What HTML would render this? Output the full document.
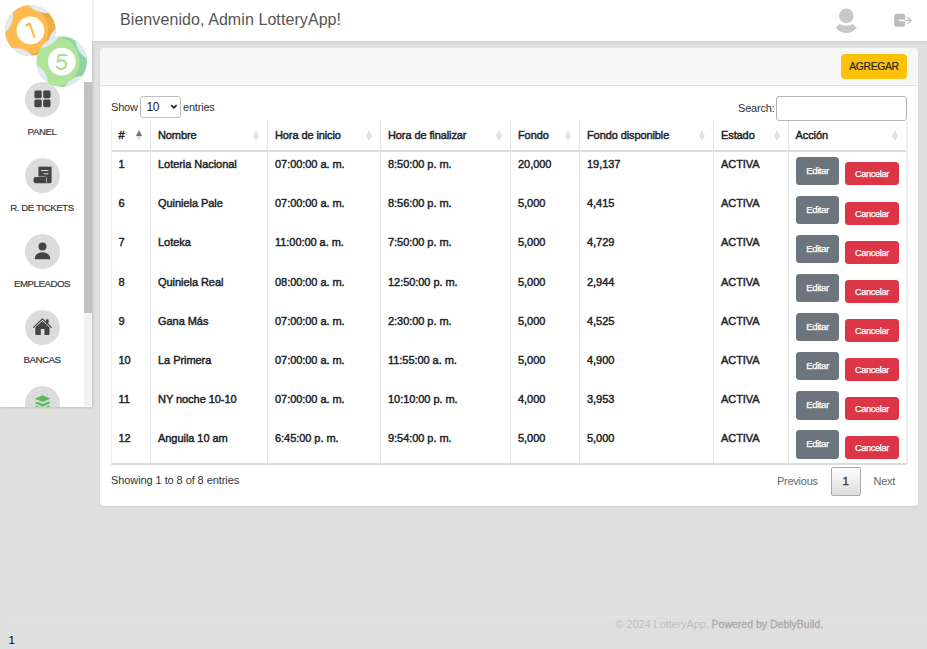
<!DOCTYPE html>
<html><head><meta charset="utf-8">
<style>
*{box-sizing:border-box;margin:0;padding:0}
html,body{width:927px;height:649px;overflow:hidden}
body{position:relative;background:#dfdfdf;font-family:"Liberation Sans",sans-serif;color:#212529}
.abs{position:absolute}
#header{left:92px;top:0;width:835px;height:41px;background:linear-gradient(90deg,#ececec 0,#f8f8f8 1.5px,#fff 3px)}
#hshadow{left:93px;top:41px;width:834px;height:4px;background:linear-gradient(#d2d2d2,#dfdfdf)}
#title{left:120px;top:10.8px;letter-spacing:0.08px;font-size:16px;color:#555;white-space:nowrap;line-height:18px}
#sidebar{left:0;top:0;width:92px;height:407px;overflow:hidden;background:#fff;box-shadow:1px 1px 2px rgba(0,0,0,.12)}
#track{left:84px;top:82px;width:8px;height:325px;background:#f3f3f3}
#thumb{left:84px;top:82px;width:8px;height:231px;background:#c1c1c1}
.circ{position:absolute;left:24.5px;width:35px;height:35px;border-radius:50%;background:#dcdcdc}
.circ svg{position:absolute;left:0;top:0}
.lbl{position:absolute;left:0;width:84px;text-align:center;font-size:9.7px;letter-spacing:-0.45px;color:#393939;-webkit-text-stroke:0.2px #393939;white-space:nowrap;line-height:12px}
#card{left:100px;top:48px;width:818px;height:458px;background:#fff;border-radius:4px;overflow:hidden;box-shadow:0 1px 2px rgba(0,0,0,.07)}
#cardhead{left:0;top:0;width:818px;height:38px;background:#f7f7f7;border-bottom:1px solid #e2e2e2}
#agregar{left:741px;top:5.5px;width:66px;height:25.5px;background:#ffc107;border-radius:4px;font-size:10.3px;letter-spacing:-0.3px;-webkit-text-stroke:0.2px #212529;color:#212529;text-align:center;line-height:25.5px}
.t{position:absolute;white-space:nowrap;line-height:12px}
.show{font-size:11px;color:#333;letter-spacing:-0.2px}
#sel{left:140px;top:96px;width:40.5px;height:21.5px;border:1px solid #bdbdbd;border-radius:3px;background:#fff;font-size:12px;letter-spacing:-0.6px;color:#222;padding-left:5.6px;line-height:21.6px}
#search{left:775.5px;top:96px;width:131.5px;height:24.5px;border:1px solid #b4b4b4;border-radius:3px;background:#fff}
#tbl{left:111px;top:121px;width:796px;height:343px;background:#fff}
#thline{left:111px;top:150px;width:796px;height:2px;background:#dcdcdc}
#tbline{left:111px;top:463px;width:796px;height:1.5px;background:#dcdcdc}
.vline{position:absolute;top:121px;width:1px;height:342px;background:#e3e6ea}
.th{top:129px;font-size:11px;font-weight:normal;-webkit-text-stroke:0.45px #212529;color:#212529;letter-spacing:-0.1px}
.td{font-size:11px;font-weight:normal;-webkit-text-stroke:0.45px #212529;color:#212529;letter-spacing:-0.05px}
.sort{position:absolute;top:129.6px;width:7px;height:12px}
.sort i{position:absolute;left:0;width:0;height:0;border-left:3.2px solid transparent;border-right:3.2px solid transparent}
.sort .up{top:0;border-bottom:6.2px solid #e2e2e2}
.sort .dn{top:6.2px;border-top:5.8px solid #e2e2e2}
.sort.act .up{border-bottom-color:#727272}
.btn{position:absolute;color:#fff;text-align:center;border-radius:3.5px;font-size:9.5px;white-space:nowrap}
.ed{left:796px;width:43px;height:28.3px;line-height:27.8px;background:#6c757d;font-size:9.6px;letter-spacing:-0.45px;-webkit-text-stroke:0.25px #fff}
.ca{left:845px;width:54px;height:23px;line-height:24px;background:#dc3545;font-size:9.2px;letter-spacing:-0.32px;-webkit-text-stroke:0.25px #fff}
.info{font-size:11px;color:#333;letter-spacing:-0.08px}
.pg{font-size:11px;color:#666;letter-spacing:-0.25px}
#pg1{left:831px;top:467px;width:29.5px;height:28.5px;border:1px solid #a9a9a9;border-radius:2px;background:linear-gradient(#fff,#dcdcdc);font-size:11.5px;color:#333;text-align:center;line-height:27px;-webkit-text-stroke:0.3px #333}
.foot{font-size:11px;color:#c0c0c0;letter-spacing:-0.1px}
.foot b{color:#ababab;font-weight:normal;font-size:10.5px;letter-spacing:0;-webkit-text-stroke:0.35px #ababab}
.one{font-size:11.5px;color:#000}

.vline.first{background:#edeff1;width:1.6px}

</style></head><body>
<div id="sidebar" class="abs"><div id="track" class="abs"></div><div id="thumb" class="abs"></div><div class="circ" style="top:81.5px"><svg width="35" height="35"><g fill="#444"><rect x="9.4" y="8.6" width="7.3" height="7.6" rx="1.4"/><rect x="18.2" y="8.6" width="7.3" height="7.6" rx="1.4"/><rect x="9.4" y="17.6" width="7.3" height="7.6" rx="1.4"/><rect x="18.2" y="17.6" width="7.3" height="7.6" rx="1.4"/></g></svg>
</div><div class="lbl" style="top:126px">PANEL</div><div class="circ" style="top:157.5px">
<svg width="35" height="35"><path d="M13.4 8.3 L14.3 8.9 L15.2 8.3 L16.1 8.9 L17 8.3 L17.9 8.9 L18.8 8.3 L19.7 8.9 L20.6 8.3 L21.5 8.9 L22.4 8.3 L23.3 8.9 L24.2 8.3 L25.1 8.9 L26.6 8.3 L26.6 23.8 Q26.6 25.2 25.2 25.2 L14.8 25.2 Q13.4 25.2 13.4 23.8 Z" fill="#444"/><path d="M16 12.6 H23.4 M18.6 15.8 H23.4" stroke="#dcdcdc" stroke-width="1"/><rect x="7.8" y="18.4" width="14" height="7.5" rx="2.2" fill="#dcdcdc"/><path d="M10.5 19.1 H21.1 V25.2 H10.5 Q8.5 25.2 8.5 22.15 Q8.5 19.1 10.5 19.1 Z" fill="#444"/></svg>
</div><div class="lbl" style="top:202px">R. DE TICKETS</div><div class="circ" style="top:233.5px">
<svg width="35" height="35"><g fill="#444"><circle cx="17.5" cy="12.5" r="3.95"/><path d="M9.7 25.2 C9.9 20.3 13.5 18.2 17.5 18.2 C21.5 18.2 25.1 20.3 25.3 25.2 Z"/></g></svg>
</div><div class="lbl" style="top:278px">EMPLEADOS</div><div class="circ" style="top:309.5px">
<svg width="35" height="35"><g fill="#444"><path d="M17.4 10.9 L24.5 17.6 L24.5 23.9 Q24.5 24.9 23.5 24.9 L19.5 24.9 L19.5 19.1 L15.8 19.1 L15.8 24.9 L11.3 24.9 Q10.3 24.9 10.3 23.9 L10.3 17.6 Z"/><rect x="21" y="9.4" width="2.6" height="4.2"/><path d="M8.6 17.4 L17.4 8.9 L26.2 17.4" stroke="#444" stroke-width="1.3" fill="none" stroke-linecap="round" stroke-linejoin="round"/></g></svg>
</div><div class="lbl" style="top:354px">BANCAS</div><div class="circ" style="top:385.5px">
<svg width="35" height="35"><g fill="#5cb85c"><path d="M17.6 9.3 L25.4 12.7 L17.6 16.1 L9.8 12.7 Z"/><path d="M11.6 15.4 L17.6 18.1 L23.6 15.4 L25.4 16.9 L17.6 20.7 L9.8 16.9 Z"/><path d="M11.6 19.6 L17.6 22.3 L23.6 19.6 L25.4 21.1 L17.6 24.9 L9.8 21.1 Z"/></g></svg>
</div></div><svg class="abs" style="left:0;top:0" width="92" height="92"><clipPath id="co"><circle cx="30.5" cy="30.5" r="25.4"/></clipPath><g clip-path="url(#co)"><circle cx="30.5" cy="30.5" r="25.4" fill="#e9ad46"/><circle cx="23.0" cy="30.5" r="25.4" fill="#ffbb4e"/><circle cx="71.39" cy="46.20" r="23.5" fill="#dfeaf5"/><circle cx="14.80" cy="71.39" r="23.5" fill="#dfeaf5"/><circle cx="-10.39" cy="14.80" r="23.5" fill="#dfeaf5"/><circle cx="46.20" cy="-10.39" r="23.5" fill="#dfeaf5"/></g><circle cx="30.5" cy="30.5" r="13.9" fill="#fff"/><path d="M26.2 25.3 L29.6 23.5 L34.4 37.2" stroke="#ffbb4e" stroke-width="2.1" fill="none" stroke-linecap="round" stroke-linejoin="round"/><clipPath id="cg"><circle cx="61.8" cy="61.6" r="25.3"/></clipPath><g clip-path="url(#cg)"><circle cx="61.8" cy="61.6" r="25.3" fill="#90d4a3"/><circle cx="54.3" cy="61.6" r="25.3" fill="#b0e499"/><circle cx="98.94" cy="38.39" r="23.5" fill="#dfeaf5"/><circle cx="85.01" cy="98.74" r="23.5" fill="#dfeaf5"/><circle cx="24.66" cy="84.81" r="23.5" fill="#dfeaf5"/><circle cx="38.59" cy="24.46" r="23.5" fill="#dfeaf5"/></g><circle cx="61.8" cy="61.6" r="13.9" fill="#fff"/><path d="M66.6 55 L59 55 L57.6 61.6 Q60.5 59.8 63.2 60.6 Q66.2 61.6 66 65.2 Q65.6 68.8 61.6 69 Q58 69.1 56.6 66.6" stroke="#a8e08f" stroke-width="2.1" fill="none" stroke-linecap="round" stroke-linejoin="round"/></svg>
<div id="header" class="abs">
<svg class="abs" style="left:741px;top:6px" width="30" height="30"><g fill="#c8c8c8"><circle cx="13.3" cy="9.85" r="7.3"/><path d="M2.7 21.9 L6.4 18 Q13.3 21.6 19.7 18 L23.9 21.9 Q13.3 32.3 2.7 21.9 Z"/></g></svg>
<svg class="abs" style="left:801px;top:12px" width="22" height="18"><rect x="1.25" y="1.7" width="11" height="13" rx="2.2" fill="#bdbdbd"/><path d="M6 8.4 H17.2" stroke="#fff" stroke-width="1.6"/><path d="M12.2 8.4 H17.2 M14.4 4.9 L17.9 8.4 L14.4 11.9" stroke="#bdbdbd" stroke-width="1.3" fill="none"/></svg>
</div><div id="hshadow" class="abs"></div><div id="title" class="abs">Bienvenido, Admin LotteryApp!</div><div id="card" class="abs"><div id="cardhead" class="abs"><div id="agregar" class="abs">AGREGAR</div></div></div><div class="t show" style="left:111px;top:101px">Show</div><div id="sel" class="abs">10<svg width="8" height="6" viewBox="0 0 8 6" style="position:absolute;left:28.6px;top:7.3px"><path d="M1.2 1.2 L3.9 3.8 L6.6 1.2" stroke="#222" stroke-width="1.7" fill="none"/></svg></div><div class="t show" style="left:183px;top:101px">entries</div><div class="t show" style="left:738px;top:102px">Search:</div><div id="search" class="abs"></div><div id="tbl" class="abs"></div><div id="thline" class="abs"></div><div id="tbline" class="abs"></div><div class="vline first" style="left:110.5px"></div><div class="vline" style="left:150.0px"></div><div class="vline" style="left:267.0px"></div><div class="vline" style="left:380.0px"></div><div class="vline" style="left:510.0px"></div><div class="vline" style="left:579.0px"></div><div class="vline" style="left:713.0px"></div><div class="vline" style="left:787.5px"></div><div class="vline first" style="left:906.0px"></div><div class="t th" style="left:118.5px">#</div><div class="sort act" style="left:136.2px"><i class="up"></i><i class="dn"></i></div><div class="t th" style="left:158.0px">Nombre</div><div class="sort" style="left:253.2px"><i class="up"></i><i class="dn"></i></div><div class="t th" style="left:275.0px">Hora de inicio</div><div class="sort" style="left:366.2px"><i class="up"></i><i class="dn"></i></div><div class="t th" style="left:388.0px">Hora de finalizar</div><div class="sort" style="left:496.2px"><i class="up"></i><i class="dn"></i></div><div class="t th" style="left:518.0px">Fondo</div><div class="sort" style="left:565.2px"><i class="up"></i><i class="dn"></i></div><div class="t th" style="left:587.0px">Fondo disponible</div><div class="sort" style="left:699.2px"><i class="up"></i><i class="dn"></i></div><div class="t th" style="left:721.0px">Estado</div><div class="sort" style="left:773.7px"><i class="up"></i><i class="dn"></i></div><div class="t th" style="left:795.5px">Acción</div><div class="sort" style="left:892.2px"><i class="up"></i><i class="dn"></i></div><div class="t td" style="left:118.5px;top:158.2px">1</div><div class="t td" style="left:158.0px;top:158.2px">Loteria Nacional</div><div class="t td" style="left:275.0px;top:158.2px">07:00:00 a. m.</div><div class="t td" style="left:388.0px;top:158.2px">8:50:00 p. m.</div><div class="t td" style="left:518.0px;top:158.2px">20,000</div><div class="t td" style="left:587.0px;top:158.2px">19,137</div><div class="t td" style="left:721.0px;top:158.2px">ACTIVA</div><div class="btn ed" style="top:156.7px">Editar</div><div class="btn ca" style="top:162.4px">Cancelar</div><div class="t td" style="left:118.5px;top:197.3px">6</div><div class="t td" style="left:158.0px;top:197.3px">Quiniela Pale</div><div class="t td" style="left:275.0px;top:197.3px">07:00:00 a. m.</div><div class="t td" style="left:388.0px;top:197.3px">8:56:00 p. m.</div><div class="t td" style="left:518.0px;top:197.3px">5,000</div><div class="t td" style="left:587.0px;top:197.3px">4,415</div><div class="t td" style="left:721.0px;top:197.3px">ACTIVA</div><div class="btn ed" style="top:195.8px">Editar</div><div class="btn ca" style="top:201.5px">Cancelar</div><div class="t td" style="left:118.5px;top:236.4px">7</div><div class="t td" style="left:158.0px;top:236.4px">Loteka</div><div class="t td" style="left:275.0px;top:236.4px">11:00:00 a. m.</div><div class="t td" style="left:388.0px;top:236.4px">7:50:00 p. m.</div><div class="t td" style="left:518.0px;top:236.4px">5,000</div><div class="t td" style="left:587.0px;top:236.4px">4,729</div><div class="t td" style="left:721.0px;top:236.4px">ACTIVA</div><div class="btn ed" style="top:234.9px">Editar</div><div class="btn ca" style="top:240.6px">Cancelar</div><div class="t td" style="left:118.5px;top:275.5px">8</div><div class="t td" style="left:158.0px;top:275.5px">Quiniela Real</div><div class="t td" style="left:275.0px;top:275.5px">08:00:00 a. m.</div><div class="t td" style="left:388.0px;top:275.5px">12:50:00 p. m.</div><div class="t td" style="left:518.0px;top:275.5px">5,000</div><div class="t td" style="left:587.0px;top:275.5px">2,944</div><div class="t td" style="left:721.0px;top:275.5px">ACTIVA</div><div class="btn ed" style="top:274.0px">Editar</div><div class="btn ca" style="top:279.7px">Cancelar</div><div class="t td" style="left:118.5px;top:314.6px">9</div><div class="t td" style="left:158.0px;top:314.6px">Gana Más</div><div class="t td" style="left:275.0px;top:314.6px">07:00:00 a. m.</div><div class="t td" style="left:388.0px;top:314.6px">2:30:00 p. m.</div><div class="t td" style="left:518.0px;top:314.6px">5,000</div><div class="t td" style="left:587.0px;top:314.6px">4,525</div><div class="t td" style="left:721.0px;top:314.6px">ACTIVA</div><div class="btn ed" style="top:313.1px">Editar</div><div class="btn ca" style="top:318.8px">Cancelar</div><div class="t td" style="left:118.5px;top:353.7px">10</div><div class="t td" style="left:158.0px;top:353.7px">La Primera</div><div class="t td" style="left:275.0px;top:353.7px">07:00:00 a. m.</div><div class="t td" style="left:388.0px;top:353.7px">11:55:00 a. m.</div><div class="t td" style="left:518.0px;top:353.7px">5,000</div><div class="t td" style="left:587.0px;top:353.7px">4,900</div><div class="t td" style="left:721.0px;top:353.7px">ACTIVA</div><div class="btn ed" style="top:352.2px">Editar</div><div class="btn ca" style="top:357.9px">Cancelar</div><div class="t td" style="left:118.5px;top:392.8px">11</div><div class="t td" style="left:158.0px;top:392.8px">NY noche 10-10</div><div class="t td" style="left:275.0px;top:392.8px">07:00:00 a. m.</div><div class="t td" style="left:388.0px;top:392.8px">10:10:00 p. m.</div><div class="t td" style="left:518.0px;top:392.8px">4,000</div><div class="t td" style="left:587.0px;top:392.8px">3,953</div><div class="t td" style="left:721.0px;top:392.8px">ACTIVA</div><div class="btn ed" style="top:391.3px">Editar</div><div class="btn ca" style="top:397.0px">Cancelar</div><div class="t td" style="left:118.5px;top:431.9px">12</div><div class="t td" style="left:158.0px;top:431.9px">Anguila 10 am</div><div class="t td" style="left:275.0px;top:431.9px">6:45:00 p. m.</div><div class="t td" style="left:388.0px;top:431.9px">9:54:00 p. m.</div><div class="t td" style="left:518.0px;top:431.9px">5,000</div><div class="t td" style="left:587.0px;top:431.9px">5,000</div><div class="t td" style="left:721.0px;top:431.9px">ACTIVA</div><div class="btn ed" style="top:430.4px">Editar</div><div class="btn ca" style="top:436.1px">Cancelar</div><div class="t info" style="left:111px;top:474px">Showing 1 to 8 of 8 entries</div><div class="t pg" style="left:777px;top:475px">Previous</div><div id="pg1" class="abs">1</div><div class="t pg" style="left:873.5px;top:475px">Next</div><div class="abs" style="left:10px;top:616px;width:917px;height:1px;background:#e1e2e4"></div><div class="t foot" style="left:615.5px;top:618px">© 2024 LotteryApp, <b>Powered by DeblyBuild.</b></div><div class="t one" style="left:8.5px;top:634px">1</div></body></html>
